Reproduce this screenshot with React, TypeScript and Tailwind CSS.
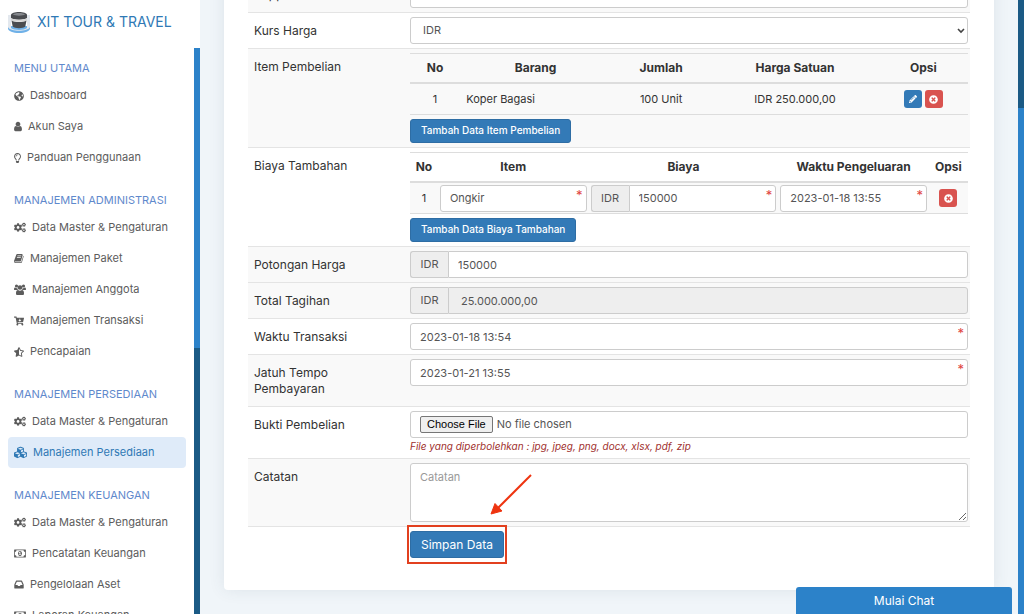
import { useState, type ReactNode } from "react";
import {
  FaCartArrowDown,
  FaCogs,
  FaCubes,
  FaGlobeAmericas,
  FaPencilAlt,
  FaRegLightbulb,
  FaStarHalfAlt,
  FaTimesCircle,
} from "react-icons/fa";

const USER =
  "M1536 1399q0 109-62.5 187t-150.5 78h-854q-88 0-150.5-78t-62.5-187q0-85 8.5-160.5t31.5-152 58.5-131 94-89 134.5-34.5q131 128 313 128t313-128q76 0 134.5 34.5t94 89 58.5 131 31.5 152 8.5 160.5zm-256-887q0 159-112.5 271.5t-271.5 112.5-271.5-112.5-112.5-271.5 112.5-271.5 271.5-112.5 271.5 112.5 112.5 271.5z";
const BOOK =
  "M1703 478q40 57 18 129l-275 906q-19 64-76.5 107.5t-122.5 43.5h-923q-77 0-148.5-53.5t-99.5-131.5q-24-67-2-127 0-4 3-27t4-37q1-8-3-21.5t-3-19.5q2-11 8-21t16.5-23.5 16.5-23.5q23-38 45-91.5t30-91.5q3-10 .5-30t-.5-28q3-11 17-28t17-23q21-36 42-92t25-90q1-9-2.5-32t.5-28q4-13 22-30.5t22-22.5q19-26 42.5-84.5t27.5-96.5q1-8-3-25.5t-2-26.5q2-8 9-18t18-23 17-21q8-12 16.5-30.5t15-35 16-36 19.5-32 26.5-23.5 36-11.5 47.5 5.5l-1 3q38-9 51-9h761q74 0 114 56t18 130l-274 906q-36 119-71.5 153.5t-128.5 34.5h-869q-27 0-38 15-11 16-1 43 24 70 144 70h923q29 0 56-15.5t35-41.5l300-987q7-22 5-57 38 15 59 43zm-1064 2q-4 13 2 22.5t20 9.5h608q13 0 25.5-9.5t16.5-22.5l21-64q4-13-2-22.5t-20-9.5h-608q-13 0-25.5 9.5t-16.5 22.5zm-83 256q-4 13 2 22.5t20 9.5h608q13 0 25.5-9.5t16.5-22.5l21-64q4-13-2-22.5t-20-9.5h-608q-13 0-25.5 9.5t-16.5 22.5z";
const MONEY =
  "M768 1152h384v-96h-128v-448h-114l-148 137 77 80q42-37 55-57h2v288h-128v96zm512-256q0 70-21 142t-59.5 134-101.5 101-138 39-138-39-101.5-101-59.5-134-21-142 21-142 59.5-134 101.5-101 138-39 138 39 101.5 101 59.5 134 21 142zm512 256v-512q-106 0-181-75t-75-181h-1152q0 106-75 181t-181 75v512q106 0 181 75t75 181h1152q0-106 75-181t181-75zm128-832v1152q0 26-19 45t-45 19h-1792q-26 0-45-19t-19-45v-1152q0-26 19-45t45-19h1792q26 0 45 19t19 45z";
const INBOX =
  "M1151 960h316q-1-3-2.5-8t-2.5-8l-212-496h-708l-212 496q-1 2-2.5 8t-2.5 8h316l95 192h320zm513 30v482q0 26-19 45t-45 19h-1408q-26 0-45-19t-19-45v-482q0-62 25-123l238-552q10-25 36.5-42t52.5-17h832q26 0 52.5 17t36.5 42l238 552q25 61 25 123z";

function Glyph({ d, box, className }: { d: string; box: string; className: string }) {
  return (
    <svg viewBox={box} fill="currentColor" className={className} aria-hidden="true">
      <path d={d} />
    </svg>
  );
}

function UsersIcon() {
  return (
    <svg viewBox="0 0 24 22" fill="currentColor" className="h-[11px] w-3" aria-hidden="true">
      <circle cx="5" cy="4" r="3.2" />
      <circle cx="19" cy="4" r="3.2" />
      <circle cx="12" cy="7" r="4.6" />
      <path d="M0 11c0-3 1-4 2.500-4 1 1 2.500 1.500 4 1.200.2 1.800 1 3 2 3.800H2C.7 12 0 11.800 0 11zM24 11c0-3-1-4-2.500-4-1 1-2.500 1.500-4 1.200-.2 1.800-1 3-2 3.800H22c1.300 0 2-.2 2-1zM4 19c0-4 1-7 4.200-7 2 1.800 5.600 1.800 7.600 0C19 12 20 15 20 19c0 2-1 3-3 3H7c-2 0-3-1-3-3z" />
    </svg>
  );
}

const money = <Glyph d={MONEY} box="0 0 1920 1792" className="h-[11px] w-3" />;
const cogs = <FaCogs className="h-[11px] w-3" />;

const MENU: { title: string; items: { label: string; icon: ReactNode; active?: boolean }[] }[] = [
  {
    title: "MENU UTAMA",
    items: [
      { label: "Dashboard", icon: <FaGlobeAmericas className="size-[10px]" /> },
      { label: "Akun Saya", icon: <Glyph d={USER} box="256 0 1280 1792" className="h-[11px] w-2" /> },
      { label: "Panduan Penggunaan", icon: <FaRegLightbulb className="h-[10px] w-[7px]" /> },
    ],
  },
  {
    title: "MANAJEMEN ADMINISTRASI",
    items: [
      { label: "Data Master & Pengaturan", icon: cogs },
      { label: "Manajemen Paket", icon: <Glyph d={BOOK} box="64 0 1728 1792" className="h-[11px] w-[10px]" /> },
      { label: "Manajemen Anggota", icon: <UsersIcon /> },
      { label: "Manajemen Transaksi", icon: <FaCartArrowDown className="size-[10px]" /> },
      { label: "Pencapaian", icon: <FaStarHalfAlt className="size-[10px]" /> },
    ],
  },
  {
    title: "MANAJEMEN PERSEDIAAN",
    items: [
      { label: "Data Master & Pengaturan", icon: cogs },
      { label: "Manajemen Persediaan", icon: <FaCubes className="size-[13px]" />, active: true },
    ],
  },
  {
    title: "MANAJEMEN KEUANGAN",
    items: [
      { label: "Data Master & Pengaturan", icon: cogs },
      { label: "Pencatatan Keuangan", icon: money },
      { label: "Pengelolaan Aset", icon: <Glyph d={INBOX} box="128 0 1536 1792" className="h-[11px] w-[10px]" /> },
      { label: "Laporan Keuangan", icon: money },
    ],
  },
];

function Logo() {
  return (
    <svg viewBox="0 0 24 24" className="h-6 w-6 shrink-0" aria-hidden="true">
      <path d="M1 16h22v2.500C23 21 18 23 12 23S1 21 1 18.500z" fill="#6fb1e8" />
      <path d="M1 5h3v13c2 2.500 14 2.500 16 0V5h3v12c-2 5-20 5-22 0z" fill="#e3e8ee" />
      <path d="M4 5c0-4 16-4 16 0v3c-2 2.200-14 2.200-16 0z" fill="#4a4c50" />
      <path d="M6 4.500c1-2 11-2 12 0-2 1.500-10 1.500-12 0z" fill="#85888d" />
      <path d="M4 8c3 2.400 13 2.400 16 0v2.200c-3 2.200-13 2.200-16 0z" fill="#d5d5d5" />
      <path d="M4.500 10.500c3 2 12 2 15 0l-1.200 6c-2 2.200-10.600 2.200-12.600 0z" fill="#4a4c50" />
    </svg>
  );
}

function Sidebar() {
  return (
    <aside className="flex w-[200px] shrink-0 flex-col bg-white">
      <a href="#" className="flex h-12 shrink-0 items-center gap-1.5 px-[7px] pb-1 text-sm text-[#2f79b5]">
        <Logo />
        XIT TOUR &amp; TRAVEL
      </a>
      <div className="flex min-h-0 flex-1">
        <nav className="flex min-w-0 flex-1 flex-col gap-[17px] overflow-hidden pt-2.5 pr-2 pl-2">
          {MENU.map((group) => (
            <section key={group.title} className="shrink-0">
              <h2 className="pb-0.5 pl-1.5 text-[11px] leading-5 whitespace-nowrap text-[#5f89cc]">{group.title}</h2>
              <ul>
                {group.items.map((item) => (
                  <li key={item.label}>
                    <a
                      href="#"
                      className={`flex h-[31px] items-center gap-1.5 rounded px-1.5 text-[11px] whitespace-nowrap ${
                        item.active ? "bg-[#dfebf9] text-[#2f79b5]" : "text-[#5c5c5c]"
                      }`}
                    >
                      <span className="shrink-0">{item.icon}</span>
                      {item.label}
                    </a>
                  </li>
                ))}
              </ul>
            </section>
          ))}
        </nav>
        <div className="w-1.5 shrink-0 bg-[#1b5a85]">
          <div className="h-[300px] bg-[#2c82c9]" />
        </div>
      </div>
    </aside>
  );
}

const base = "block h-[27px] w-full min-w-0 rounded-[3px] border border-[#ccc] text-[11px] text-[#555] outline-none";
const control = `${base} bg-white px-[9px]`;
const addon =
  "flex h-[27px] w-[38px] shrink-0 items-center justify-center rounded-l-[3px] border border-r-0 border-[#ccc] bg-[#eee] text-[11px] text-[#555]";
const th = "h-[31px] border-t border-b-2 border-[#ddd] font-bold";
const td = "h-[31px] border-b border-[#ddd]";

function Row({ label, htmlFor, striped, children }: {
  label: string;
  htmlFor?: string;
  striped?: boolean;
  children: ReactNode;
}) {
  return (
    <div className={`flex border-t border-[#e4e4e4] py-1 pr-0.5 pl-1.5 ${striped ? "bg-[#f9f9f9]" : "bg-white"}`}>
      <div className="w-[156px] shrink-0 pt-1.5 pr-10 leading-4">
        {htmlFor ? <label htmlFor={htmlFor}>{label}</label> : label}
      </div>
      <div className="min-w-0 flex-1">{children}</div>
    </div>
  );
}

function Required({ children }: { children: ReactNode }) {
  return (
    <div className="relative min-w-0 flex-1">
      {children}
      <span className="absolute top-0.5 right-1 text-[13px] leading-4 text-[#e04440]">*</span>
    </div>
  );
}

function AddButton({ children }: { children: ReactNode }) {
  return (
    <button type="button" className="mt-1 block h-6 rounded-[3px] border border-[#2e6da4] bg-[#337ab7] px-2.5 text-[10px] font-medium text-white">
      {children}
    </button>
  );
}

function DeleteButton() {
  return (
    <button type="button" aria-label="Hapus" className="grid size-[18px] place-items-center rounded-[3px] bg-[#d9534f] text-white">
      <FaTimesCircle className="size-[9px]" />
    </button>
  );
}

function ItemTable() {
  return (
    <table className="w-full table-fixed border-separate border-spacing-0">
      <colgroup>
        <col className="w-[9%]" />
        <col className="w-[27%]" />
        <col className="w-[18%]" />
        <col className="w-[30%]" />
        <col className="w-[16%]" />
      </colgroup>
      <thead>
        <tr>
          <th className={th}>No</th>
          <th className={th}>Barang</th>
          <th className={th}>Jumlah</th>
          <th className={th}>Harga Satuan</th>
          <th className={th}>Opsi</th>
        </tr>
      </thead>
      <tbody className="text-center text-[11px]">
        <tr>
          <td className={td}>1</td>
          <td className={`${td} pl-1.5 text-left`}>Koper Bagasi</td>
          <td className={td}>100 Unit</td>
          <td className={td}>IDR 250.000,00</td>
          <td className={td}>
            <div className="flex justify-center gap-[3px]">
              <button type="button" aria-label="Ubah" className="grid size-[18px] place-items-center rounded-[3px] bg-[#337ab7] text-white">
                <FaPencilAlt className="size-2" />
              </button>
              <DeleteButton />
            </div>
          </td>
        </tr>
      </tbody>
    </table>
  );
}

function CostTable() {
  return (
    <table className="w-full table-fixed border-separate border-spacing-0">
      <colgroup>
        <col className="w-[5%]" />
        <col className="w-[27%]" />
        <col className="w-[34%]" />
        <col className="w-[27%]" />
        <col className="w-[7%]" />
      </colgroup>
      <thead>
        <tr>
          <th className={th}>No</th>
          <th className={th}>Item</th>
          <th className={th}>Biaya</th>
          <th className={th}>Waktu Pengeluaran</th>
          <th className={th}>Opsi</th>
        </tr>
      </thead>
      <tbody className="bg-[#f9f9f9] text-[11px]">
        <tr>
          <td className={`${td} text-center`}>1</td>
          <td className={`${td} px-0.5`}>
            <Required>
              <input className={control} aria-label="Item" defaultValue="Ongkir" />
            </Required>
          </td>
          <td className={`${td} px-0.5`}>
            <div className="flex">
              <span className={addon}>IDR</span>
              <Required>
                <input className={`${control} rounded-l-none`} aria-label="Biaya" defaultValue="150000" />
              </Required>
            </div>
          </td>
          <td className={`${td} px-0.5`}>
            <Required>
              <input className={control} aria-label="Waktu Pengeluaran" defaultValue="2023-01-18 13:55" />
            </Required>
          </td>
          <td className={td}>
            <div className="flex justify-center">
              <DeleteButton />
            </div>
          </td>
        </tr>
      </tbody>
    </table>
  );
}

function PurchaseForm() {
  const [currency, setCurrency] = useState("IDR");

  return (
    <form className="text-xs text-[#333]" onSubmit={(e) => { e.preventDefault(); }}>
      <Row label="Supplier" htmlFor="supplier" striped>
        <input id="supplier" className={control} />
      </Row>
      <Row label="Kurs Harga" htmlFor="currency">
        <div className="relative">
          <select
            id="currency"
            className={`${base} appearance-none bg-white px-3`}
            value={currency}
            onChange={(e) => { setCurrency(e.target.value); }}
          >
            <option>IDR</option>
            <option>USD</option>
          </select>
          <svg viewBox="0 0 8 6" className="pointer-events-none absolute top-[11px] right-[3px] h-1.5 w-2" aria-hidden="true">
            <path d="M1 1l3 3 3-3" fill="none" stroke="#444" strokeWidth="1.600" />
          </svg>
        </div>
      </Row>
      <Row label="Item Pembelian" striped>
        <ItemTable />
        <AddButton>Tambah Data Item Pembelian</AddButton>
      </Row>
      <Row label="Biaya Tambahan">
        <CostTable />
        <AddButton>Tambah Data Biaya Tambahan</AddButton>
      </Row>
      <Row label="Potongan Harga" htmlFor="discount" striped>
        <div className="flex">
          <span className={addon}>IDR</span>
          <input id="discount" className={`${control} rounded-l-none`} defaultValue="150000" />
        </div>
      </Row>
      <Row label="Total Tagihan" htmlFor="total" striped>
        <div className="flex">
          <span className={addon}>IDR</span>
          <input id="total" className={`${base} rounded-l-none bg-[#eee] px-3`} value="25.000.000,00" readOnly />
        </div>
      </Row>
      <Row label="Waktu Transaksi" htmlFor="date">
        <Required>
          <input id="date" className={control} defaultValue="2023-01-18 13:54" />
        </Required>
      </Row>
      <Row label="Jatuh Tempo Pembayaran" htmlFor="due" striped>
        <div className="min-h-[43px]">
          <Required>
            <input id="due" className={control} defaultValue="2023-01-21 13:55" />
          </Required>
        </div>
      </Row>
      <Row label="Bukti Pembelian" htmlFor="proof">
        <input
          id="proof"
          type="file"
          className={`${control} py-1 leading-[17px] file:mr-1 file:h-[17px] file:rounded-[2px] file:border file:border-solid file:border-[#767676] file:bg-[#efefef] file:px-1.5 file:font-['Liberation_Sans',sans-serif] file:text-[11px] file:leading-[15px] file:text-black`}
        />
        <p className="text-[10px] leading-4 text-[#a02f2d] italic">
          File yang diperbolehkan : jpg, jpeg, png, docx, xlsx, pdf, zip
        </p>
      </Row>
      <Row label="Catatan" htmlFor="note" striped>
        <textarea
          id="note"
          placeholder="Catatan"
          className="block h-[59px] w-full rounded-[3px] border border-[#ccc] bg-white px-[9px] py-1 text-[11px] leading-[18px] text-[#555] outline-none placeholder:text-[#999]"
        />
      </Row>
      <div className="flex border-t border-[#e4e4e4] py-1 pl-[162px]">
        <div className="relative">
          <button type="submit" className="h-[27px] rounded-[3px] border border-[#2e6da4] bg-[#337ab7] px-2.5 text-xs text-white">
            Simpan Data
          </button>
          <span className="pointer-events-none absolute -inset-x-[3px] -inset-y-1.5 border-2 border-[#e2401f]" />
          <svg viewBox="0 0 42 42" className="pointer-events-none absolute bottom-[42px] left-20 size-[42px]" aria-hidden="true">
            <path d="M41 1L8 34" stroke="#ee3410" strokeWidth="2" />
            <path d="M1 40L5 29.500L12 37z" fill="#ee3410" stroke="#ee3410" />
          </svg>
        </div>
      </div>
    </form>
  );
}

export default function App() {
  return (
    <div className="flex h-screen overflow-hidden bg-[#f0f5f9] font-['Inter',sans-serif]">
      <Sidebar />
      <main className="min-w-0 flex-1 overflow-hidden px-6">
        {/* the page is scrolled part way down the form */}
        <div className="-mt-6 rounded-b bg-white px-6 pb-7 shadow-[0_0_16px_rgba(60,80,100,0.100)]">
          <PurchaseForm />
        </div>
      </main>
      <div className="w-1.5 shrink-0 bg-[#2c82c9]">
        <div className="h-[108px] bg-[#1b5a85]" />
      </div>
      <button
        type="button"
        className="fixed right-3 bottom-0 h-[27px] w-[216px] rounded-t-[3px] bg-[#2c82c9] text-xs text-white"
      >
        Mulai Chat
      </button>
    </div>
  );
}
